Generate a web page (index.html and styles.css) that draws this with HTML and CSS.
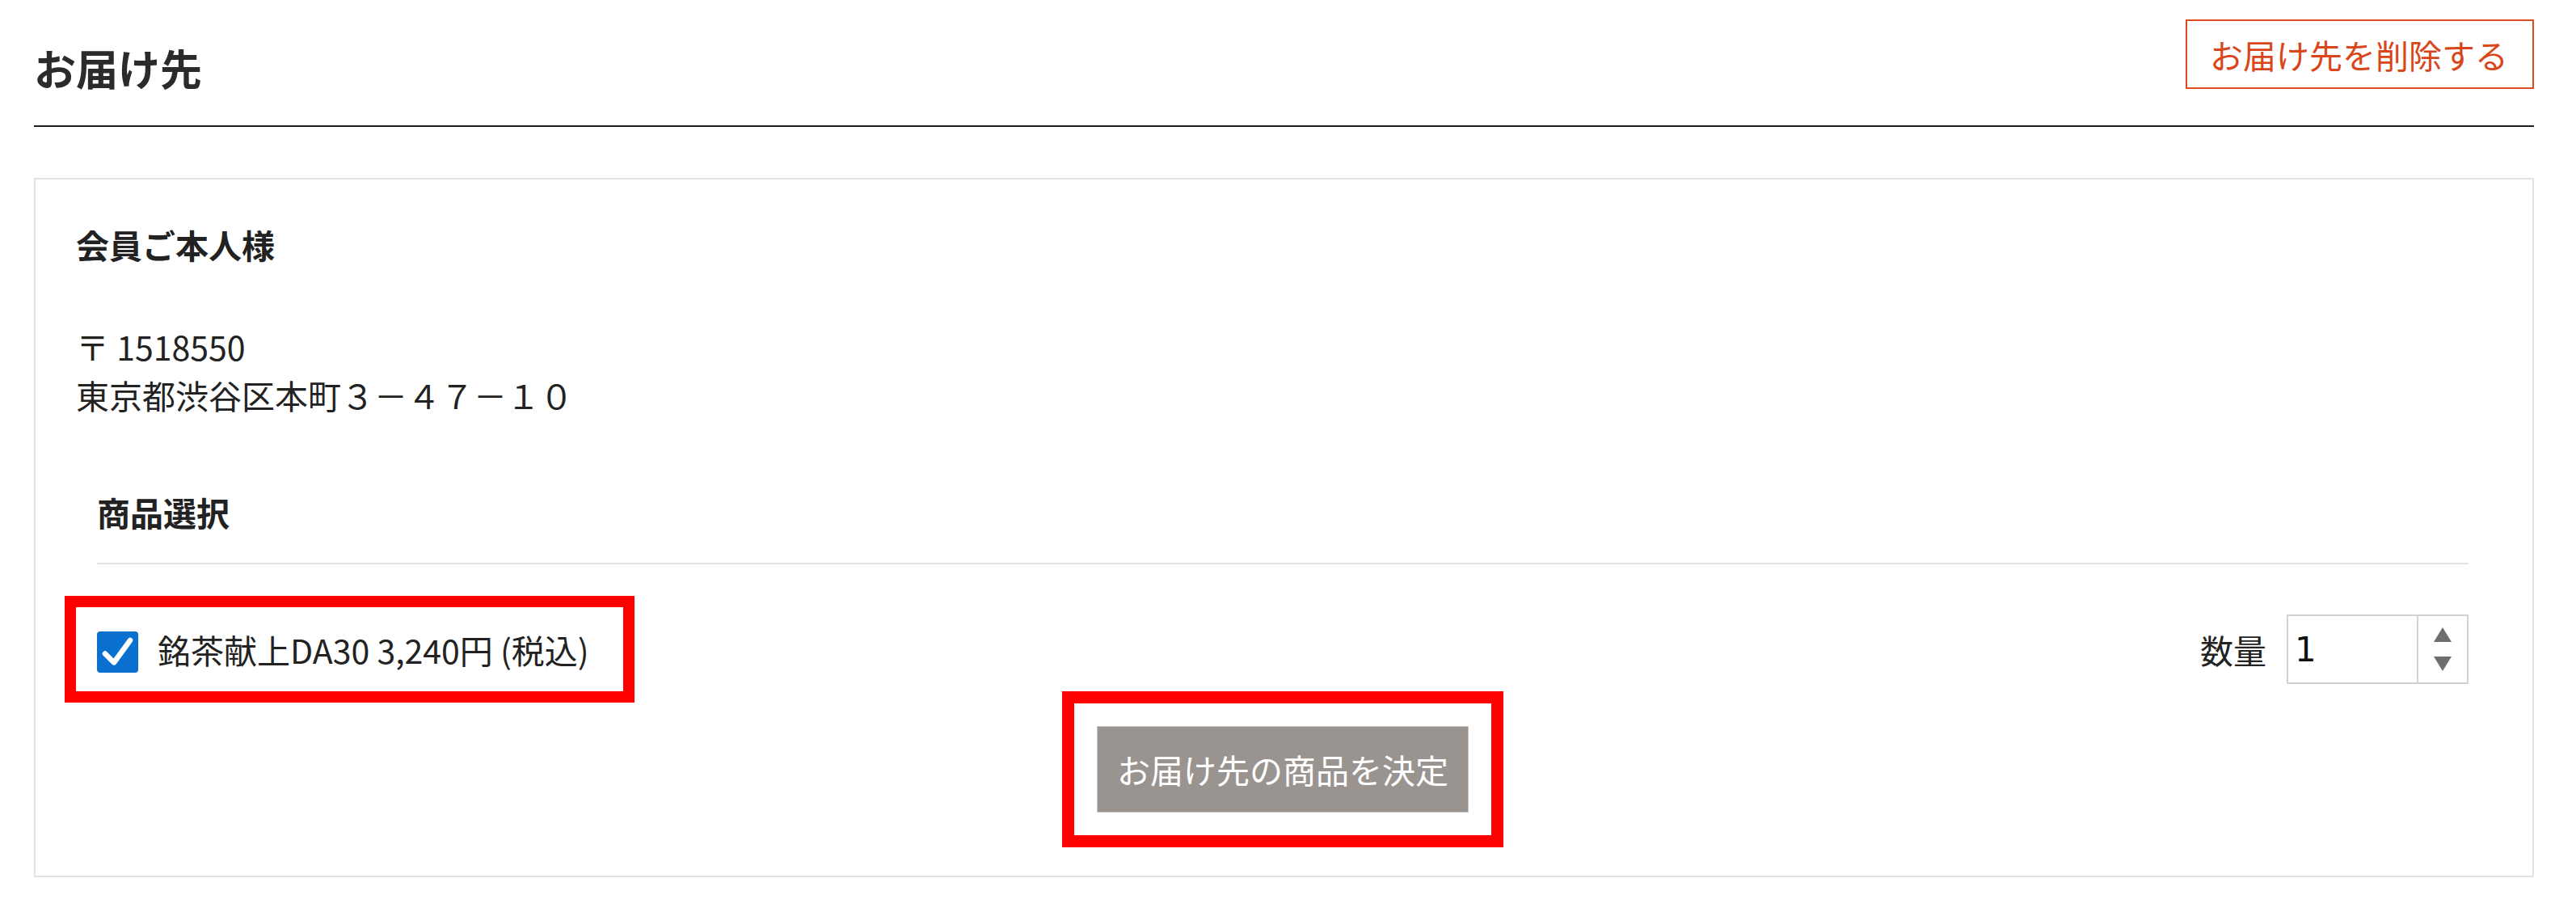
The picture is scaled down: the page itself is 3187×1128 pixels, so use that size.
FILE: index.html
```html
<!DOCTYPE html>
<html>
<head>
	<meta charset="utf-8">
	<title>お届け先</title>
	<link rel="stylesheet" href="styles.css">
</head>
<body>
	<div class="page">
		<div class="head">
			<h2 class="title">お届け先</h2>
			<button type="button" class="delete-btn">お届け先を削除する</button>
		</div>

		<div class="card">
			<p class="name">会員ご本人様</p>
			<p class="address">〒 1518550<br>東京都渋谷区本町３－４７－１０</p>

			<div class="items">
				<h3 class="items-title">商品選択</h3>
				<div class="item-row">
					<label class="item-label mark">
						<span class="check">
							<svg width="51" height="51" viewBox="0 0 51 51"><path d="M10 27.5 L21 38.5 L41 11" fill="none" stroke="#fff" stroke-width="6.5" stroke-linecap="round" stroke-linejoin="round"/></svg>
						</span>
						<span class="item-text">銘茶献上DA30 3,240円 (税込)</span>
					</label>
					<div class="qty">
						<span class="qty-label">数量</span>
						<div class="qty-box">
							<input type="text" class="qty-input" value="1">
							<span class="spin"><i class="up"></i><i class="down"></i></span>
						</div>
					</div>
				</div>
				<div class="actions">
					<button type="button" class="decide-btn mark">お届け先の商品を決定</button>
				</div>
			</div>
		</div>
	</div>
</body>
</html>
```

FILE: styles.css
```css
body {
	margin: 0;
	background-color: #fff;
	color: #222;
	font-family: "Noto Sans CJK JP", "Noto Sans", sans-serif;
	font-size: 41px;
	line-height: 60px;
}
.page {
	padding: 24px 52px 0 42px;
}
.head {
	display: flex;
	justify-content: space-between;
	align-items: flex-end;
	padding-bottom: 45px;
	border-bottom: 2px solid #1e1e1e;
}
.title {
	margin: 0;
	color: #2b2b2b;
	font-size: 52px;
	line-height: 1;
	font-weight: 700;
}
.delete-btn {
	padding: 11px 30px 11px 28px;
	border: 2px solid #de4b1e;
	background-color: #fff;
	color: #d9461a;
	font-family: inherit;
	font-size: 41px;
	line-height: 60px;
}
.card {
	margin-top: 63px;
	padding: 50px 50px 78px 50px;
	border: 2px solid #e3e3e3;
}
.name {
	margin: 0;
	font-weight: 700;
}
.address {
	margin: 66px 0 0 0;
}
.items {
	margin: 85px 29px 0 26px;
}
.items-title {
	margin: 0;
	padding-bottom: 33px;
	border-bottom: 2px solid #e3e3e3;
	font-size: 41px;
	font-weight: 700;
}
.item-row {
	display: flex;
	justify-content: space-between;
	align-items: center;
	margin-top: 62px;
}
.mark {
	outline: 14px solid #ff0000;
}
.item-label {
	display: flex;
	align-items: center;
	padding: 0 20px 0 4px;
	margin-left: -4px;
	outline-offset: 22px;
}
.check {
	display: flex;
	width: 51px;
	height: 51px;
	margin-top: 6px;
	border-radius: 4px;
	background-color: #0a70d0;
}
.item-text {
	margin-left: 24px;
}
.qty {
	display: flex;
	align-items: center;
}
.qty-label {
	margin-right: 25px;
}
.qty-box {
	display: flex;
	width: 221px;
	height: 82px;
	border: 2px solid #d2d2d2;
}
.qty-input {
	width: 0;
	flex: 1;
	padding: 0 0 0 8px;
	border: 0;
	outline: none;
	color: #111;
	font-family: "DejaVu Sans", sans-serif;
	font-size: 42px;
}
.spin {
	display: flex;
	flex-direction: column;
	align-items: center;
	justify-content: center;
	gap: 18px;
	width: 60px;
	border-left: 2px solid #d2d2d2;
}
.up {
	border-left: 11px solid transparent;
	border-right: 11px solid transparent;
	border-bottom: 18px solid #6e6e6e;
}
.down {
	border-left: 11px solid transparent;
	border-right: 11px solid transparent;
	border-top: 18px solid #6e6e6e;
}
.actions {
	display: flex;
	justify-content: center;
	margin-top: 52px;
}
.decide-btn {
	padding: 22px 24px 23px 24px;
	border: 1px solid #c9c5c3;
	background-color: #9a9491;
	color: #fff;
	font-family: inherit;
	font-size: 41px;
	line-height: 60px;
	outline-width: 15px;
	outline-offset: 28px;
}
```
